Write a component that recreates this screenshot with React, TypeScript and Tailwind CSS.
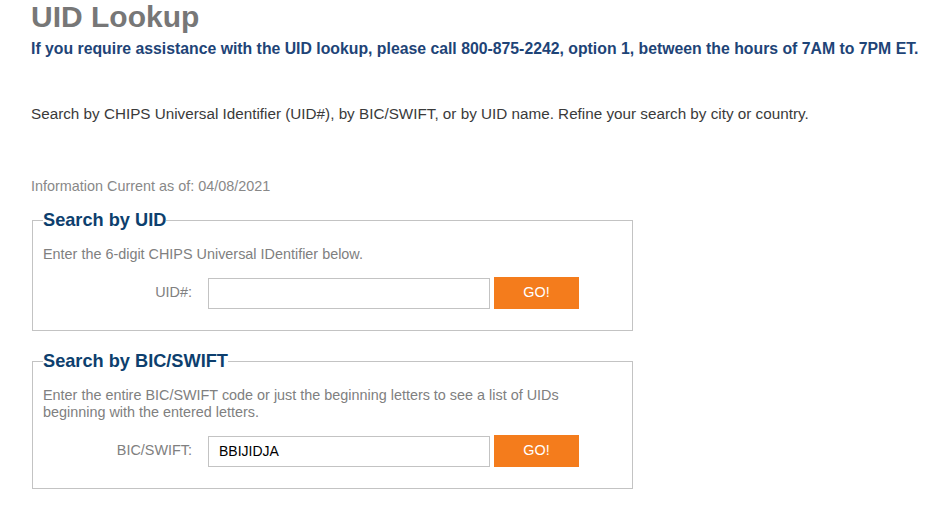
import React from "react";

function SearchBox({
  title,
  label,
  value,
  children,
}: {
  title: string;
  label: string;
  value?: string;
  children: React.ReactNode;
}) {
  return (
    <fieldset className="w-[601px] border border-[#c3c3c3] px-[10px] pb-[21px]">
      <legend className="text-[18.2px] leading-[21px] font-bold text-[#0d3f6e]">{title}</legend>
      <p className="mt-[15px] text-[14.4px] leading-[17px] text-[#808080]">{children}</p>
      <div className="mt-[14px] flex items-center">
        <label className="w-[149px] text-right text-[14.4px] text-[#808080]">{label}</label>
        <input
          type="text"
          defaultValue={value}
          className="ml-[16px] h-[31px] w-[282px] border border-[#c3c3c3] px-[10px] text-[14px] text-black outline-none"
        />
        <button className="ml-[4px] h-[32px] w-[85px] bg-[#f47c1c] text-[14.4px] text-white">GO!</button>
      </div>
    </fieldset>
  );
}

export default function App() {
  return (
    <div className="min-h-screen bg-white px-[31px] font-['Liberation_Sans',Arial,sans-serif]">
      <h1 className="pt-[1px] text-[30px] leading-[31px] font-bold text-[#777777]">UID Lookup</h1>
      <p className="mt-[7px] text-[15.8px] leading-[20px] font-bold whitespace-nowrap text-[#1e4477]">
        If you require assistance with the UID lookup, please call 800-875-2242, option 1, between the hours of 7AM to 7PM ET.
      </p>
      <p className="mt-[46px] text-[15.25px] leading-[18px] text-[#3a3a3a]">
        Search by CHIPS Universal Identifier (UID#), by BIC/SWIFT, or by UID name. Refine your search by city or country.
      </p>
      <p className="mt-[55px] text-[14.4px] leading-[17px] text-[#888888]">Information Current as of: 04/08/2021</p>

      <div className="mt-[15px] ml-[1px] flex flex-col gap-[20px]">
        <SearchBox title="Search by UID" label="UID#:">
          Enter the 6-digit CHIPS Universal IDentifier below.
        </SearchBox>
        <SearchBox title="Search by BIC/SWIFT" label="BIC/SWIFT:" value="BBIJIDJA">
          Enter the entire BIC/SWIFT code or just the beginning letters to see a list of UIDs
          <br />
          beginning with the entered letters.
        </SearchBox>
      </div>
    </div>
  );
}
